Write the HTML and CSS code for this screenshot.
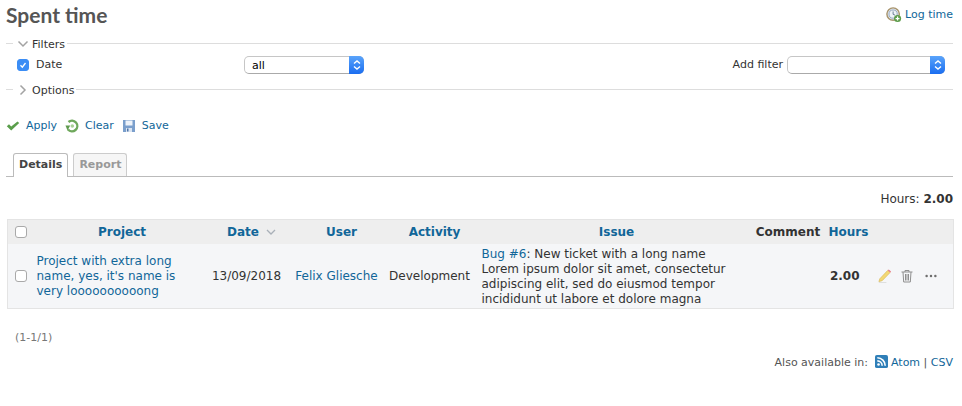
FILE: index.html
```html
<!DOCTYPE html>
<html lang="en">
<head>
<meta charset="utf-8">
<title>Spent time</title>
<link rel="stylesheet" href="styles.css">
</head>
<body>
<header class="page-head">
  <h2 class="title">Spent time</h2>
  <a class="link log-time" href="#">
    <svg class="ic18" viewBox="0 0 18 18" aria-hidden="true">
      <circle cx="8" cy="8" r="7" fill="#dfe6ee" stroke="#a8946c" stroke-width="1.6"/>
      <circle cx="8" cy="8" r="4.6" fill="#eef3f8" stroke="#8fa3bb"/>
      <path d="M8 5v3.2l2.2 1" fill="none" stroke="#5b7088" stroke-width="1"/>
      <circle cx="13" cy="13" r="4" fill="#5c9c4a"/>
      <path d="M13 10.8v4.4M10.8 13h4.4" stroke="#fff" stroke-width="1.4"/>
    </svg>
    Log time
  </a>
</header>

<fieldset class="group filters">
  <legend class="legend">
    <svg class="chev" viewBox="0 0 12 12" aria-hidden="true"><path d="M1.5 3.5 6 8l4.5-4.5" fill="none" stroke="#a3a3a3" stroke-width="1.5"/></svg>
    Filters
  </legend>
  <div class="filter-row">
    <label class="date-label">
      <span class="check on"><svg viewBox="0 0 12 12" aria-hidden="true"><path d="M3 6.3 5.2 8.6 9 3.6" fill="none" stroke="#fff" stroke-width="1.6"/></svg></span>
      Date
    </label>
    <span class="select sel-all">all<span class="stepper"><svg viewBox="0 0 8 12" aria-hidden="true"><path d="M1 4.5 4 2l3 2.5M1 7.5 4 10l3-2.5" fill="none" stroke="#fff" stroke-width="1.4"/></svg></span></span>
    <span class="add-filter">Add filter
      <span class="select sel-add"><span class="stepper"><svg viewBox="0 0 8 12" aria-hidden="true"><path d="M1 4.5 4 2l3 2.5M1 7.5 4 10l3-2.5" fill="none" stroke="#fff" stroke-width="1.4"/></svg></span></span>
    </span>
  </div>
</fieldset>

<fieldset class="group options">
  <legend class="legend">
    <svg class="chev" viewBox="0 0 12 12" aria-hidden="true"><path d="M3.5 1.5 8 6l-4.500 4.500" fill="none" stroke="#a3a3a3" stroke-width="1.5"/></svg>
    Options
  </legend>
</fieldset>

<nav class="actions">
  <a class="link action" href="#">
    <svg class="ic16" viewBox="0 0 14 14" aria-hidden="true"><path d="M.8 7.200 3 5.200 5.200 7.400 11.500 2.500 13.200 4 5.200 11.500Z" fill="#5a9e4b"/></svg>
    Apply
  </a>
  <a class="link action" href="#">
    <svg class="ic16" viewBox="0 0 14 14" aria-hidden="true"><path d="M3.500 3A5.300 5.300 0 1 1 3 10.500" fill="none" stroke="#6fa85c" stroke-width="2.400"/><circle cx="7.300" cy="7" r="1.800" fill="#a8d096"/><path d="M.5 6.500 5.200 6.500 2.500 11.500Z" fill="#5f9a4d"/></svg>
    Clear
  </a>
  <a class="link action" href="#">
    <svg class="ic16" viewBox="0 0 14 14" aria-hidden="true"><path d="M1 1h12v12H1z" fill="#7b9fcc"/><path d="M3.500 1.500h7v5h-7z" fill="#eef3fa"/><path d="M4 9h6v4H4z" fill="#dbe5f2"/><path d="M5 9.500h1.500v3H5z" fill="#4d74a8"/></svg>
    Save
  </a>
</nav>

<div class="tabs">
  <a class="tab active" href="#">Details</a>
  <a class="tab" href="#">Report</a>
</div>

<p class="total">Hours: <strong>2.00</strong></p>

<table class="list">
  <colgroup>
    <col class="c-check"><col class="c-project"><col class="c-date"><col class="c-user"><col class="c-activity"><col class="c-issue"><col class="c-comment"><col class="c-hours"><col class="c-btn">
  </colgroup>
  <thead>
    <tr>
      <th><span class="check"></span></th>
      <th class="sortable"><a class="link" href="#">Project</a></th>
      <th class="sortable"><a class="link" href="#">Date</a><svg class="sort" viewBox="0 0 10 6" aria-hidden="true"><path d="M1 1l4 4 4-4" fill="none" stroke="#a9b0b8" stroke-width="1.300"/></svg></th>
      <th class="sortable"><a class="link" href="#">User</a></th>
      <th class="sortable"><a class="link" href="#">Activity</a></th>
      <th class="sortable"><a class="link" href="#">Issue</a></th>
      <th>Comment</th>
      <th class="th-hours"><a class="link" href="#">Hours</a></th>
      <th></th>
    </tr>
  </thead>
  <tbody>
    <tr>
      <td><span class="check"></span></td>
      <td class="left"><a class="link" href="#">Project with extra long name, yes, it's name is very loooooooooong</a></td>
      <td>13/09/2018</td>
      <td><a class="link" href="#">Felix Gliesche</a></td>
      <td>Development</td>
      <td class="left"><a class="link" href="#">Bug #6</a>: New ticket with a long name<br>Lorem ipsum dolor sit amet, consectetur adipiscing elit, sed do eiusmod tempor incididunt ut labore et dolore magna</td>
      <td></td>
      <td class="hours">2.00</td>
      <td class="btns">
        <svg class="ic16 pencil" viewBox="0 0 16 16" aria-hidden="true"><path d="M3 11.500 11.500 2.500l2.500 2.300L5.500 13.500 2 14.500Z" fill="#f3d873" stroke="#d9b95a" stroke-width=".7"/><path d="M11.500 2.500l1-1 2.500 2.300-1 1Z" fill="#e8798a"/><path d="M2 15.500h8" stroke="#dcdcdc"/></svg>
        <svg class="ic16 trash" viewBox="0 0 16 16" aria-hidden="true"><path d="M2.500 4h11M6 4V2.500h4V4M4 4l.7 10h6.600L12 4M6.500 6v6.500M8 6v6.500M9.500 6v6.500" fill="none" stroke="#8f8f8f" stroke-width="1"/></svg>
        <svg class="ic16 dots" viewBox="0 0 16 16" aria-hidden="true"><circle cx="3" cy="8" r="1.400" fill="#6e6e6e"/><circle cx="8" cy="8" r="1.400" fill="#6e6e6e"/><circle cx="13" cy="8" r="1.400" fill="#6e6e6e"/></svg>
      </td>
    </tr>
  </tbody>
</table>

<p class="pagination">(1-1/1)</p>

<p class="formats">Also available in:
  <svg class="feed" viewBox="0 0 14 14" aria-hidden="true"><rect width="14" height="14" rx="2" fill="#2f7fb8"/><circle cx="3.800" cy="10.300" r="1.400" fill="#fff"/><path d="M2.500 6.300a5.200 5.200 0 0 1 5.200 5.200M2.500 3a8.500 8.500 0 0 1 8.500 8.500" fill="none" stroke="#fff" stroke-width="1.700"/></svg>
  <a class="link" href="#">Atom</a> | <a class="link" href="#">CSV</a>
</p>
</body>
</html>
```
FILE: styles.css
```css
* { box-sizing: border-box; }
html, body { margin: 0; background: #fff; }
body {
  padding: 0 9px 0 6px;
  font: 12px/14px "DejaVu Sans", Verdana, sans-serif;
  color: #333;
  height: 406px;
  overflow: hidden;
}
.link { color: #169; text-decoration: none; }
.page-head {
  display: flex;
  justify-content: space-between;
  align-items: center;
  height: 30px;
}
.title {
  margin: 0;
  font: bold 21px/30px Lato, "Open Sans", sans-serif;
  color: #555;
}
.log-time { display: flex; align-items: center; gap: 3px; font-size: 11px; }
.ic18 { width: 16px; height: 16px; }
.group {
  margin: 0;
  padding: 0;
  border: 0;
  border-top: 1px solid #ddd;
  min-width: 0;
}
.filters { margin-top: 4px; height: 46px; }
.options { height: 30px; }
.legend {
  margin-left: 7px;
  padding: 4px 2px 0 4px;
  display: flex;
  align-items: center;
  gap: 3px;
  font-size: 11px;
  line-height: 14px;
}
.chev { width: 12px; height: 12px; margin-top: -2px; }
.filter-row {
  display: flex;
  align-items: center;
  height: 22px;
  margin-top: 2px;
  padding-left: 11px;
  font-size: 11px;
}
.date-label { display: flex; align-items: center; gap: 7px; width: 227px; }
.check {
  display: inline-block;
  width: 12px;
  height: 12px;
  border: 1px solid #a9a9a9;
  border-radius: 3px;
  background: #fff;
  vertical-align: middle;
}
.check.on { background: #3b8df5; border-color: #3b8df5; display: flex; }
.check svg { width: 10px; height: 10px; }
.select {
  position: relative;
  display: inline-block;
  height: 18px;
  line-height: 17px;
  border: 1px solid #c6c6c6;
  border-bottom-color: #aaa;
  border-radius: 5px;
  background: #fff;
  padding-left: 7px;
  font-size: 11px;
  color: #000;
}
.sel-all { width: 120px; }
.sel-add { width: 158px; margin-left: 1px; }
.stepper {
  position: absolute;
  top: -1px;
  right: -1px;
  bottom: -1px;
  width: 15px;
  border-radius: 0 5px 5px 0;
  background: linear-gradient(#5aa4fb, #1a6df0);
  display: flex;
  align-items: center;
  justify-content: center;
}
.stepper svg { width: 8px; height: 12px; }
.add-filter { margin-left: auto; margin-right: 8px; display: flex; align-items: center; gap: 3px; }
.actions { display: flex; gap: 8px; height: 16px; margin-top: 8px; }
.action { display: flex; align-items: center; gap: 6px; font-size: 11px; }
.ic16 { width: 14px; height: 14px; flex: none; }
.tabs {
  display: flex;
  gap: 5px;
  margin-top: 19px;
  height: 24px;
  padding-left: 7px;
  border-bottom: 1px solid #bbb;
}
.tab {
  height: 23px;
  padding: 0 5px;
  line-height: 22px;
  font-size: 11px;
  font-weight: bold;
  color: #999;
  text-decoration: none;
  background: #f6f6f6;
  border: 1px solid #ccc;
  border-bottom: 0;
  border-radius: 3px 3px 0 0;
}
.tab.active {
  height: 24px;
  color: #444;
  background: #fff;
  border-color: #bbb;
}
.total { margin: 15px 0 0; height: 14px; text-align: right; }
.list {
  width: 946px;
  margin: 13px 0 0 1px;
  table-layout: fixed;
  border-collapse: collapse;
  border: 1px solid #e4e4e4;
  background: #f5f6f8;
}
.c-check { width: 22px; }
.c-project { width: 175px; }
.c-date { width: 84px; }
.c-user { width: 96px; }
.c-activity { width: 90px; }
.c-issue { width: 274px; }
.c-comment { width: 79px; }
.c-hours { width: 43px; }
.c-btn { width: 83px; }
th {
  height: 24px;
  padding: 0;
  background: #eee;
  font-weight: bold;
  white-space: nowrap;
  text-align: center;
}
th.sortable { padding-left: 10px; }
th.th-hours { text-align: left; padding-left: 1px; }
td { height: 65px; padding: 0; vertical-align: middle; text-align: center; }
th:first-child, td:first-child { padding-left: 7px; text-align: left; }
.left { text-align: left; padding: 2px 4px 0 7px; line-height: 15px; }
.hours { font-weight: bold; text-align: right; padding-right: 11px; }
.btns { text-align: left; padding-left: 6px; white-space: nowrap; }
.btns svg { vertical-align: middle; }
.pencil { width: 15px; height: 15px; }
.trash { width: 16px; height: 16px; margin-left: 4px; }
.dots { margin-left: 5px; }
.sort { width: 10px; height: 6px; margin-left: 7px; vertical-align: middle; }
.pagination { margin: 22px 0 0 9px; height: 14px; font-size: 11px; color: #777; }
.formats {
  margin: 10px 0 0;
  font-size: 11px;
  text-align: right;
  color: #555;
}
.feed { width: 13px; height: 13px; vertical-align: -2px; margin-left: 3px; }
```
